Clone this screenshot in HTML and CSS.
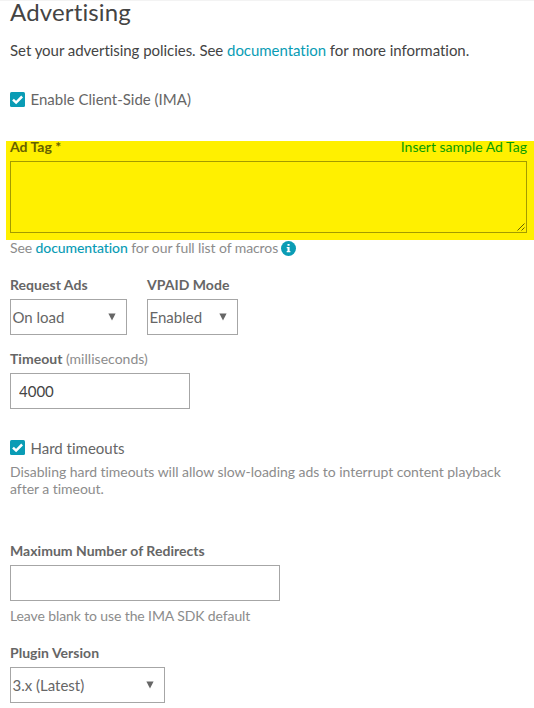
FILE: index.html
```
<!DOCTYPE html>
<html lang="en">
<head>
<meta charset="utf-8">
<title>Advertising</title>
<link rel="stylesheet" href="styles.css">
</head>
<body>
<main class="page">
  <h1 class="title">Advertising</h1>
  <p class="intro">Set your advertising policies. See <a class="link" href="#">documentation</a> for more information.</p>

  <label class="check check-ima">
    <svg class="box" viewBox="0 0 15 15"><rect width="15" height="15" rx="1.5" fill="#0a9cb5"/><path d="M3 7.6 6.1 10.6 12.1 4.5" fill="none" stroke="#fff" stroke-width="2.5"/></svg>
    <span>Enable Client-Side (IMA)</span>
  </label>

  <section class="adtag">
    <div class="adtag-head">
      <span class="adtag-label">Ad Tag *</span>
      <a class="adtag-link" href="#">Insert sample Ad Tag</a>
    </div>
    <div class="textarea">
      <svg class="grip" viewBox="0 0 8 8"><path d="M.5 7.5 7.5.5M4.5 7.5 7.5 4.5" fill="none" stroke="#554f00" stroke-width=".9"/></svg>
    </div>
  </section>
  <p class="hint macros">See <a class="link strong" href="#">documentation</a> for our full list of macros <svg class="info" viewBox="0 0 15 15"><circle cx="7.5" cy="7.5" r="7.5" fill="#0a9cb5"/><path d="M6.5 3h2.1v1.8H6.5zM5.7 6h2.9v4h.8v1.3H5.7V10h.8V7.2h-.8z" fill="#fff"/></svg></p>

  <div class="row">
    <div class="field">
      <span class="label">Request Ads</span>
      <div class="select w-request"><span>On load</span><svg class="arrow" viewBox="0 0 8 8"><path d="M.4.6h7.2L4 7.6z"/></svg></div>
    </div>
    <div class="field">
      <span class="label">VPAID Mode</span>
      <div class="select w-vpaid"><span>Enabled</span><svg class="arrow" viewBox="0 0 8 8"><path d="M.4.6h7.2L4 7.6z"/></svg></div>
    </div>
  </div>

  <div class="field timeout">
    <span class="label">Timeout <span class="unit">(milliseconds)</span></span>
    <input class="input w-timeout" type="text" value="4000">
  </div>

  <label class="check check-hard">
    <svg class="box" viewBox="0 0 15 15"><rect width="15" height="15" rx="1.5" fill="#0a9cb5"/><path d="M3 7.6 6.1 10.6 12.1 4.5" fill="none" stroke="#fff" stroke-width="2.5"/></svg>
    <span>Hard timeouts</span>
  </label>
  <p class="hint hard-hint">Disabling hard timeouts will allow slow-loading ads to interrupt content playback after a timeout.</p>

  <div class="field redirects">
    <span class="label">Maximum Number of Redirects</span>
    <input class="input w-redirects" type="text">
    <p class="hint">Leave blank to use the IMA SDK default</p>
  </div>

  <div class="field plugin">
    <span class="label">Plugin Version</span>
    <div class="select w-plugin"><span>3.x (Latest)</span><svg class="arrow" viewBox="0 0 8 8"><path d="M.4.6h7.2L4 7.6z"/></svg></div>
  </div>
</main>
</body>
</html>
```
FILE: styles.css
```
* { box-sizing: border-box; }
body {
  margin: 0;
  background: #fff;
  color: #666;
  font-family: Lato, "Liberation Sans", sans-serif;
  font-size: 14px;
  line-height: 17px;
  font-variant-ligatures: none;
}
h1, p { margin: 0; }
svg { display: block; flex: none; }
.page {
  height: 708px;
  padding: 0 7px 0 10px;
  border-top: 1px solid #f3f3f3;
  display: flex;
  flex-direction: column;
}
.title {
  color: #444;
  font-size: 24px;
  font-weight: 400;
  line-height: 22px;
  letter-spacing: 0.15px;
}
.intro {
  color: #444;
  font-size: 15px;
  line-height: 20px;
  letter-spacing: -0.04px;
  margin-top: 17px;
}
.link { color: #0a9cb5; text-decoration: none; }
.strong { font-weight: 500; }
.check {
  display: flex;
  align-items: center;
  gap: 5.5px;
  height: 15px;
  font-size: 15px;
}
.box { width: 15px; height: 15px; }
.check-ima { margin-top: 32px; }
.adtag {
  margin: 34px -7px 0 -4px;
  height: 99px;
  padding: 0 7px 0 4px;
  background: #fff000;
}
.adtag-head {
  display: flex;
  justify-content: space-between;
  height: 20px;
  line-height: 12px;
}
.adtag-label { color: #666000; font-weight: 700; }
.adtag-link { color: #0a9c00; text-decoration: none; }
.textarea {
  height: 72px;
  border: 1px solid #a39b00;
  display: flex;
  align-items: flex-end;
  justify-content: flex-end;
  padding: 1px;
}
.grip { width: 8px; height: 8px; }
.hint { color: #8c8c8c; letter-spacing: -0.035px; }
.macros { display: flex; height: 15px; line-height: 15px; white-space: pre; letter-spacing: -0.09px; }
.info { width: 15px; height: 15px; margin: 1px 0 0 -0.5px; }
.row { display: flex; gap: 20px; margin-top: 21px; }
.field { display: flex; flex-direction: column; align-items: flex-start; }
.label { font-weight: 700; margin-bottom: 6px; letter-spacing: 0.03px; }
.unit { color: #8c8c8c; font-weight: 400; }
.select {
  height: 36px;
  border: 1px solid #a6a6a6;
  padding: 0 10px 0 1.5px;
  display: flex;
  align-items: center;
  justify-content: space-between;
  font-size: 15px;
}
.arrow { width: 8px; height: 8px; fill: #666; }
.input {
  height: 36px;
  border: 1px solid #a6a6a6;
  padding: 0 8px;
  background: #fff;
  color: #444;
  font: 15px Lato, "Liberation Sans", sans-serif;
  outline: 0;
}
.w-request { width: 117px; }
.w-vpaid { width: 91px; }
.w-timeout { width: 180px; }
.w-redirects { width: 270px; }
.w-plugin { width: 155px; }
.timeout { margin-top: 15px; }
.check-hard { margin-top: 31px; }
.check-hard span { margin-top: 1px; }
.hard-hint { margin-top: 8px; }
.redirects { margin-top: 45px; }
.redirects .hint { margin-top: 6px; letter-spacing: -0.11px; }
.plugin { margin-top: 20px; }
```
